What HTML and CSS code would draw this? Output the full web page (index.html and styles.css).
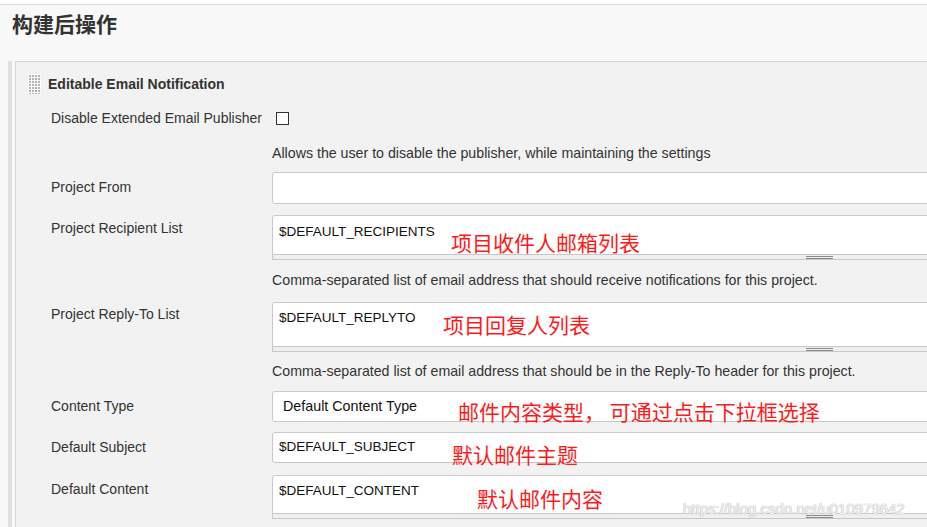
FILE: index.html
```html
<!DOCTYPE html>
<html lang="zh-CN">
<head>
<meta charset="utf-8">
<title>构建后操作</title>
<link rel="stylesheet" href="styles.css">
</head>
<body>
<div class="topbar"></div>
<h2 class="section-title">构建后操作</h2>
<div class="rail">
  <div class="panel">
    <div class="panel-head"><span class="grip"></span><span class="panel-title">Editable Email Notification</span></div>

    <div class="row r-disable">
      <div class="lbl">Disable Extended Email Publisher</div>
      <div class="field"><span class="checkbox"></span></div>
    </div>
    <div class="row r-desc1">
      <div class="lbl"></div>
      <div class="field desc">Allows the user to disable the publisher, while maintaining the settings</div>
    </div>

    <div class="row r-from">
      <div class="lbl pad-in">Project From</div>
      <div class="field"><div class="input h-from"></div></div>
    </div>

    <div class="row r-recip">
      <div class="lbl pad-ta">Project Recipient List</div>
      <div class="field">
        <div class="input textarea h-recip t-recip">$DEFAULT_RECIPIENTS</div>
        <div class="handle"><span class="handle-grip"></span></div>
        <span class="note n-recip">项目收件人邮箱列表</span>
      </div>
    </div>
    <div class="row r-desc2">
      <div class="lbl"></div>
      <div class="field desc">Comma-separated list of email address that should receive notifications for this project.</div>
    </div>

    <div class="row r-reply">
      <div class="lbl pad-tb">Project Reply-To List</div>
      <div class="field">
        <div class="input textarea h-reply t-reply">$DEFAULT_REPLYTO</div>
        <div class="handle"><span class="handle-grip"></span></div>
        <span class="note n-reply">项目回复人列表</span>
      </div>
    </div>
    <div class="row r-desc3">
      <div class="lbl"></div>
      <div class="field desc">Comma-separated list of email address that should be in the Reply-To header for this project.</div>
    </div>

    <div class="row r-ctype">
      <div class="lbl pad-in">Content Type</div>
      <div class="field">
        <div class="input h-select t-select">Default Content Type</div>
        <span class="note n-ctype">邮件内容类型， 可通过点击下拉框选择</span>
      </div>
    </div>

    <div class="row r-subject">
      <div class="lbl pad-in">Default Subject</div>
      <div class="field">
        <div class="input h-subject t-subject">$DEFAULT_SUBJECT</div>
        <span class="note n-subject">默认邮件主题</span>
      </div>
    </div>

    <div class="row r-content">
      <div class="lbl pad-tc">Default Content</div>
      <div class="field">
        <div class="input textarea h-content t-content">$DEFAULT_CONTENT</div>
        <div class="handle"><span class="handle-grip"></span></div>
        <span class="note n-content">默认邮件内容</span>
      </div>
    </div>
  </div>
</div>
<span class="watermark">https://blog.csdn.net/u010979642</span>
</body>
</html>
```

FILE: styles.css
```css
html, body {
  margin: 0;
  padding: 0;
  overflow: hidden;
}
body {
  position: relative;
  width: 927px;
  height: 527px;
  background: #f8f8f8;
  font-family: "Liberation Sans", Arial, sans-serif;
  font-size: 14px;
  color: #333;
}
.topbar {
  height: 4px;
  background: #fff;
  border-bottom: 1px solid #dcdcdc;
}
.section-title {
  margin: 4px 0 24px 12px;
  font-family: "Noto Sans CJK SC", sans-serif;
  font-size: 21px;
  line-height: 28px;
  font-weight: bold;
  color: #333;
}
.rail {
  margin-left: 8px;
  border-left: 4px solid #e1e1e1;
  padding-left: 3px;
}
.panel {
  border-top: 1px solid #d6d6d6;
  border-left: 1px solid #d6d6d6;
  background: #f2f2f2;
  height: 480px;
  overflow: hidden;
}
.panel-head {
  display: flex;
  align-items: center;
  padding: 12px 0 0 12px;
  height: 20px;
}
.grip {
  width: 13px;
  height: 20px;
  flex: none;
  background:
    linear-gradient(to right, #fbfbfb 1px, transparent 1px) 0 0 / 3px 3px,
    linear-gradient(to bottom, #fbfbfb 1px, #b4b4b4 1px) 0 0 / 3px 3px;
}
.panel-title {
  margin-left: 7px;
  font-weight: bold;
  font-size: 14px;
  line-height: 20px;
  color: #333;
}
.row {
  display: flex;
  padding-left: 35px;
}
.lbl {
  width: 221px;
  flex: none;
  line-height: 20px;
}
.pad-in { padding-top: 5px; }
.pad-ta { padding-top: 3px; }
.pad-tb { padding-top: 2px; }
.pad-tc { padding-top: 4px; }
.field {
  width: 1095px;
  flex: none;
  position: relative;
}
.desc {
  line-height: 20px;
  font-size: 14.2px;
}
.checkbox {
  display: block;
  width: 13px;
  height: 13px;
  box-sizing: border-box;
  border: 1px solid #333;
  background: #fff;
  margin: 4px 0 0 4px;
}
.input {
  box-sizing: border-box;
  background: #fff;
  border: 1px solid #c8c8c8;
  border-radius: 3px;
  font-size: 13.5px;
  line-height: 20px;
  color: #111;
  padding-left: 6px;
  white-space: nowrap;
}
.textarea {
  border-radius: 3px 3px 0 0;
}
.handle {
  height: 5px;
  box-sizing: border-box;
  border: 1px solid #c8c8c8;
  border-top: none;
  background: #efefef;
  display: flex;
  justify-content: center;
  align-items: flex-start;
  padding-top: 1px;
}
.handle-grip {
  width: 27px;
  height: 3px;
  box-sizing: border-box;
  border-top: 1px solid #8a8a8a;
  border-bottom: 1px solid #8a8a8a;
}
.h-from { height: 32px; }
.h-recip { height: 40px; }
.h-reply { height: 45px; }
.h-select { height: 31px; }
.h-subject { height: 31px; }
.h-content { height: 39px; }
.t-recip { padding-top: 6px; }
.t-reply { padding-top: 5px; }
.t-select { padding-top: 4px; padding-left: 10px; font-size: 14.3px; }
.t-subject { padding-top: 4px; }
.t-content { padding-top: 5px; }

.r-disable { margin-top: 14px; }
.r-desc1 { margin-top: 15px; }
.r-from { margin-top: 9px; }
.r-recip { margin-top: 11px; }
.r-desc2 { margin-top: 10px; }
.r-reply { margin-top: 12px; }
.r-desc3 { margin-top: 9px; }
.r-ctype { margin-top: 10px; }
.r-subject { margin-top: 10px; }
.r-content { margin-top: 12px; }

.note {
  position: absolute;
  font-family: "Noto Sans CJK SC", sans-serif;
  font-size: 21px;
  line-height: 24px;
  color: #ff1a1a;
  white-space: nowrap;
}
.n-recip { left: 179px; top: 15px; }
.n-reply { left: 171px; top: 10px; }
.n-ctype { left: 186px; top: 8px; }
.n-subject { left: 180px; top: 10px; }
.n-content { left: 205px; top: 11px; }

.watermark {
  position: absolute;
  left: 683px;
  top: 500px;
  font-family: "Liberation Sans", Arial, sans-serif;
  font-size: 15px;
  line-height: 18px;
  color: rgba(255, 255, 255, 0.85);
  text-shadow: 0 0 1px #aaa, 0 0 1px #bbb;
  white-space: nowrap;
}
```
